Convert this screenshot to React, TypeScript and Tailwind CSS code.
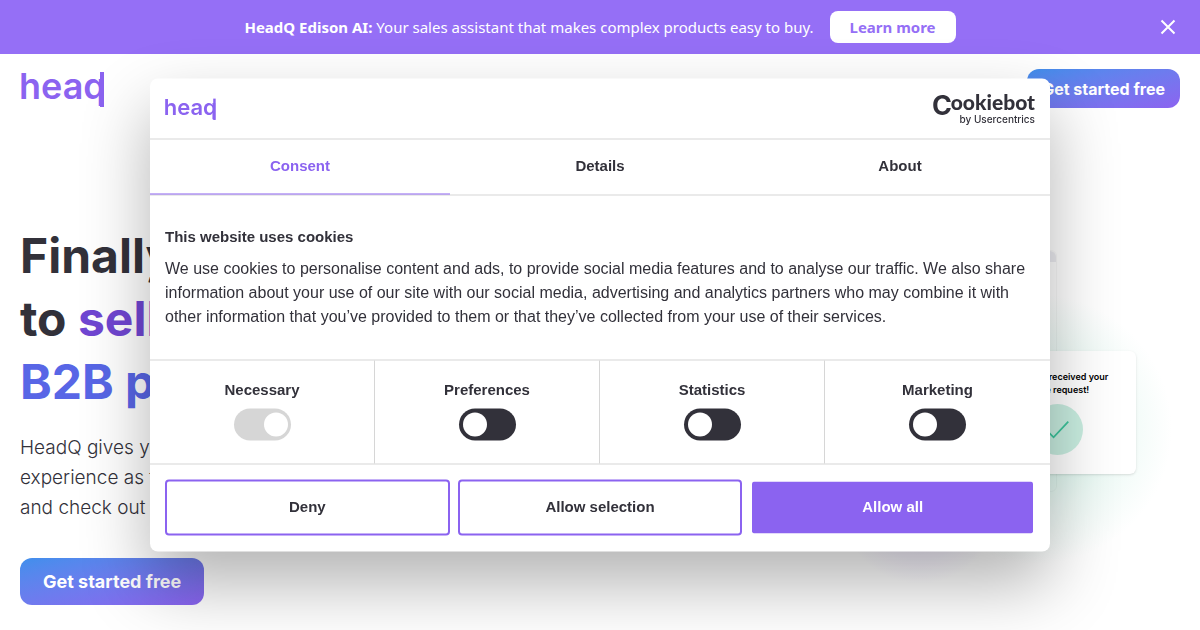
import React, { useState } from 'react';

interface CookieCategory {
  id: string;
  label: string;
  locked: boolean;
}

const categories: CookieCategory[] = [
  { id: "necessary", label: "Necessary", locked: true },
  { id: "preferences", label: "Preferences", locked: false },
  { id: "statistics", label: "Statistics", locked: false },
  { id: "marketing", label: "Marketing", locked: false }
];

const tabs = ["Consent", "Details", "About"];

const HeadqLogo: React.FC<{ className: string }> = ({ className }) => (
  <svg viewBox="0 0 88 54" className={className} role="img" aria-label="headq">
    <text x="1" y="37" fontSize="36" fontWeight="600" fill="#8b63f0" className="font-['Inter',sans-serif]">
      heaq
    </text>
    <rect x="82" y="10" width="4" height="35" fill="#8b63f0" />
  </svg>
);

const CookiebotLogo: React.FC = () => (
  <svg viewBox="0 0 104 42" className="h-[42px] w-[104px]" role="img" aria-label="Cookiebot by Usercentrics">
    <g fill="#32313a">
      <text x="0" y="27" fontSize="27" fontWeight="700" className="font-['Inter',sans-serif]">C</text>
      <text x="103" y="22" fontSize="21" fontWeight="900" textAnchor="end" className="font-['Lato',sans-serif]">
        ookiebot
      </text>
      <text x="103" y="35" fontSize="10" fontWeight="500" textAnchor="end" className="font-['Inter',sans-serif]">
        by Usercentrics
      </text>
    </g>
  </svg>
);

const PromoBanner: React.FC<{ onClose: () => void }> = ({ onClose }) => (
  <div className="relative flex h-[54px] items-center justify-center gap-4 bg-[#956ff6] font-['Noto_Sans',sans-serif] text-[15px] text-white">
    <p>
      <strong className="font-bold">HeadQ Edison AI:</strong> Your sales assistant that makes complex products easy to buy.
    </p>
    <a href="#edison" className="flex h-8 items-center rounded-lg bg-white px-5 font-bold text-[#956ff6]">
      Learn more
    </a>
    <button type="button" aria-label="Close" onClick={onClose} className="absolute right-6 top-[19px]">
      <svg viewBox="0 0 16 16" className="size-4" stroke="white" strokeWidth="2" fill="none">
        <path d="M1.500 1.500 14.500 14.500M14.500 1.500 1.500 14.500" />
      </svg>
    </button>
  </div>
);

const RequestIllustration: React.FC = () => (
  <div className="relative h-[340px] w-[320px] shrink-0">
    <div className="absolute -right-3 bottom-0 size-[270px] rounded-full bg-[radial-gradient(closest-side,#c8f0e2,#eefaf6_60%,#ffffff00)]" />
    <div className="absolute -bottom-5 left-0 size-[160px] rounded-full bg-[radial-gradient(closest-side,#e8defc,#ffffff00)]" />
    <div className="absolute left-0 right-[103px] top-[26px] h-[242px] rounded-md border border-black/3">
      <div className="h-[11px] rounded-t-md bg-[#ededf2]" />
    </div>
    <div className="absolute right-6 top-[127px] flex h-[123px] w-[157px] flex-col items-center gap-2 rounded-md bg-white pt-[19px] shadow-sm">
      <p className="text-center font-['Inter',sans-serif] text-[9px] font-semibold leading-[13px] text-black">
        You have received your
        <br />
        quote request!
      </p>
      <svg viewBox="0 0 52 52" className="size-[51px]" fill="none">
        <circle cx="26" cy="26" r="26" fill="#c9eee1" />
        <path d="M15 27 22 34 37 18" stroke="#3cc49c" strokeWidth="1.800" />
      </svg>
    </div>
  </div>
);

const CookieDialog: React.FC = () => {
  const [activeTab, setActiveTab] = useState<string>("Consent");
  const [allowed, setAllowed] = useState<string[]>(["necessary"]);

  const toggle = (id: string) =>
    setAllowed(allowed.includes(id) ? allowed.filter(a => a !== id) : [...allowed, id]);

  return (
    <div
      role="dialog"
      aria-label="Cookie consent"
      className="fixed left-1/2 top-1/2 w-full max-w-[900px] -translate-x-1/2 -translate-y-1/2 rounded-lg bg-white font-['Liberation_Sans',Arial,sans-serif] text-[15px] text-[#32313a] shadow-[0_32px_68px_rgba(0,0,0,0.3)]"
    >
      <div className="flex h-[61px] items-center justify-between border-b border-[#d6d6d6] pl-[13px] pr-3.5">
        <HeadqLogo className="h-[33px] w-[54px]" />
        <CookiebotLogo />
      </div>

      <div role="tablist" className="grid h-14 grid-cols-3 border-b border-[#d6d6d6]">
        {tabs.map(tab => (
          <button
            key={tab}
            type="button"
            role="tab"
            aria-selected={activeTab === tab}
            onClick={() => setActiveTab(tab)}
            className={activeTab === tab ? "border-b border-[#8b63f0] pb-0.5 font-bold text-[#8b63f0]" : "border-b border-transparent pb-0.5 font-bold"}
          >
            {tab}
          </button>
        ))}
      </div>

      <div className="min-h-[165px] border-b border-[#d6d6d6] px-[15px] pt-[29px] leading-6">
        <h2 className="mb-2 font-bold">This website uses cookies</h2>
        <p className="text-base leading-6">
          We use cookies to personalise content and ads, to provide social media features and to analyse our traffic. We also
          share information about your use of our site with our social media, advertising and analytics partners who may
          combine it with other information that you’ve provided to them or that they’ve collected from your use of their
          services.
        </p>
      </div>

      <div className="grid h-[104px] grid-cols-4 divide-x divide-[#d6d6d6] border-b border-[#d6d6d6]">
        {categories.map(category => (
          <label key={category.id} className="flex flex-col items-center gap-[9px] pt-[19px] font-bold leading-5">
            {category.label}
            <input
              type="checkbox"
              checked={allowed.includes(category.id)}
              disabled={category.locked}
              onChange={() => toggle(category.id)}
              className="h-8 w-[57px] appearance-none rounded-full bg-[#32313a] p-1 before:block before:size-6 before:rounded-full before:bg-white checked:bg-[#8b63f0] checked:before:ml-[26px] disabled:bg-[#d6d6d6]"
            />
          </label>
        ))}
      </div>

      <div className="grid grid-cols-3 gap-2 px-[15px] pb-4 pt-[15px] font-bold">
        <button type="button" className="h-14 rounded border-2 border-[#8b63f0] pb-0.5">Deny</button>
        <button type="button" className="h-14 rounded border-2 border-[#8b63f0] pb-0.5">Allow selection</button>
        <button type="button" className="h-14 rounded border-2 border-white bg-[#8b63f0] bg-clip-padding pb-0.5 text-white">Allow all</button>
      </div>
    </div>
  );
};

const App: React.FC = () => {
  const [showBanner, setShowBanner] = useState<boolean>(true);

  return (
    <div className="h-screen overflow-hidden bg-white text-[#32313a]">
      {showBanner && <PromoBanner onClose={() => setShowBanner(false)} />}

      <header className="flex items-start justify-between pl-[18px] pr-5 pt-2">
        <a href="#home">
          <HeadqLogo className="h-[54px] w-[88px]" />
        </a>
        <a
          href="#start"
          className="mt-[7px] flex h-[39px] items-center rounded-xl bg-linear-to-br from-[#3f8fec] to-[#8b63f0] px-[15px] font-['Inter',sans-serif] text-base font-bold text-white"
        >
          Get started free
        </a>
      </header>

      <main className="flex justify-between pl-5 pr-10 pt-[108px]">
        <div>
          <h1 className="font-['Inter',sans-serif] text-5xl font-bold leading-[63px]">
            Finally
            <br />
            to <span className="text-[#7046d2]">sell</span>
            <br />
            <span className="text-[#5866e6]">B2B pro</span>
          </h1>
          <p className="mt-5 font-['Inter',sans-serif] text-[19px] font-light leading-[30px]">
            HeadQ gives your
            <br />
            experience as they
            <br />
            and check out
          </p>
          <a
            href="#start"
            className="mt-[35px] inline-flex h-[47px] items-center rounded-xl bg-linear-to-br from-[#3f8fec] to-[#8b63f0] px-[23px] font-['Inter',sans-serif] text-lg font-bold text-white"
          >
            Get started free
          </a>
        </div>
        <RequestIllustration />
      </main>

      <CookieDialog />
    </div>
  );
};

export default App;
